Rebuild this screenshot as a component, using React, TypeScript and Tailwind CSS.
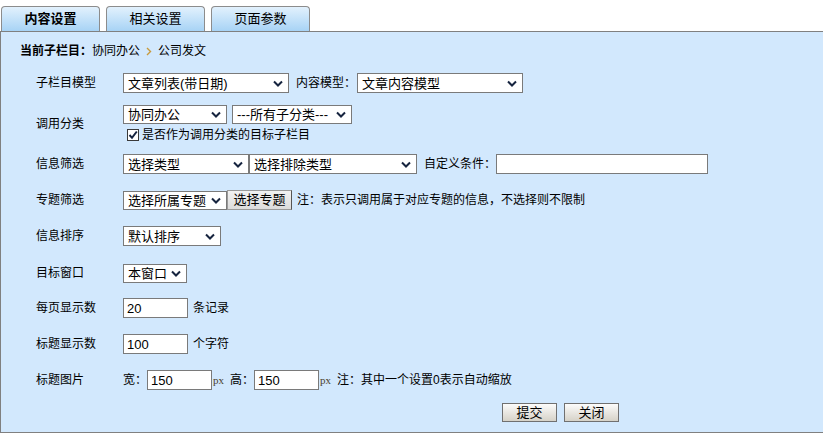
import React from "react";

const font = "font-['Liberation_Sans','Noto_Sans_CJK_SC',sans-serif]";

function Chevron() {
  return (
    <svg width="10" height="7" viewBox="0 0 10 7" className="shrink-0">
      <polyline points="1,1.5 5,5.5 9,1.5" fill="none" stroke="#16243f" strokeWidth="2" />
    </svg>
  );
}

function Select({ value, className }: { value: string; className: string }) {
  return (
    <div
      className={`flex shrink-0 items-center justify-between border border-[#7a7a7a] bg-white pl-[4px] pr-[5px] text-[13px] leading-none text-black ${className}`}
    >
      <span className="whitespace-nowrap">{value}</span>
      <Chevron />
    </div>
  );
}

function TextBox({ value, className }: { value?: string; className: string }) {
  return (
    <div
      className={`flex h-[20px] shrink-0 items-center border border-[#7a7a7a] bg-white pl-[3px] font-['Liberation_Sans',sans-serif] text-[13px] leading-none text-black ${className}`}
    >
      {value}
    </div>
  );
}

function Row({ label, children, className }: { label: string; children: React.ReactNode; className: string }) {
  return (
    <div className={`flex items-center ${className}`}>
      <div className="w-[87px] shrink-0 whitespace-nowrap">{label}</div>
      {children}
    </div>
  );
}

function Px() {
  return (
    <span className="inline-block w-[13px] pl-[1px] font-['Liberation_Serif',serif] text-[11px] text-[#4a3f2c]">
      px
    </span>
  );
}

export default function App() {
  const tabs = ["内容设置", "相关设置", "页面参数"];
  return (
    <div className={`min-h-[437px] bg-white pt-[6px] text-[12px] text-black ${font}`}>
      {/* Tabs */}
      <div className="flex gap-[6px] pl-[1px]">
        {tabs.map((t, i) => (
          <div
            key={t}
            className={`flex h-[25px] w-[99px] items-center justify-center rounded-t-[4px] border border-b-0 border-[#8c8c8c] bg-gradient-to-b from-[#e2f1fd] to-[#a7d3f5] text-[13px] ${
              i === 0 ? "font-bold" : ""
            }`}
          >
            {t}
          </div>
        ))}
      </div>

      {/* Panel */}
      <div className="border-t border-l border-b border-[#808080] bg-[#d2e8fd] pt-[10px] pb-[10px] pl-[19px]">
        <div className="flex h-[18px] items-center">
          <span className="font-bold">当前子栏目：</span>
          <span>协同办公</span>
          <svg width="6" height="9" viewBox="0 0 6 9" className="mx-[6px]">
            <polyline points="1,1 4.5,4.5 1,8" fill="none" stroke="#c89a3c" strokeWidth="1.4" />
          </svg>
          <span>公司发文</span>
        </div>

        <div className="pl-[16px]">
          <Row label="子栏目模型" className="mt-[13px] h-[20px]">
            <Select value="文章列表(带日期)" className="h-[20px] w-[166px]" />
            <span className="ml-[7px] whitespace-nowrap">内容模型：</span>
            <Select value="文章内容模型" className="ml-[1px] h-[20px] w-[166px]" />
          </Row>

          <Row label="调用分类" className="mt-[12px] h-[37px]">
            <div className="flex flex-col">
              <div className="flex h-[19px]">
                <Select value="协同办公" className="h-[19px] w-[104px]" />
                <Select value="---所有子分类---" className="ml-[5px] h-[19px] w-[120px]" />
              </div>
              <div className="mt-[4px] flex h-[14px] items-center pl-[4px]">
                <div className="flex h-[12px] w-[12px] items-center justify-center border border-[#3a3a3a] bg-white">
                  <svg width="10" height="10" viewBox="0 0 10 10">
                    <polyline points="1.5,5 4,7.8 8.8,1.5" fill="none" stroke="#14223f" strokeWidth="2" />
                  </svg>
                </div>
                <span className="ml-[3px] whitespace-nowrap">是否作为调用分类的目标子栏目</span>
              </div>
            </div>
          </Row>

          <Row label="信息筛选" className="mt-[12px] h-[20px]">
            <Select value="选择类型" className="h-[20px] w-[126px]" />
            <Select value="选择排除类型" className="h-[20px] w-[168px]" />
            <span className="ml-[7px] whitespace-nowrap">自定义条件：</span>
            <TextBox className="w-[212px]" />
          </Row>

          <Row label="专题筛选" className="mt-[16px] h-[20px]">
            <Select value="选择所属专题" className="h-[19px] w-[104px]" />
            <div className="flex h-[20px] w-[65px] shrink-0 items-center justify-center border border-[#9a9a9a] border-r-[#555] bg-gradient-to-b from-[#f2f2f2] to-[#dcdcdc] text-[13px]">
              选择专题
            </div>
            <span className="ml-[5px] whitespace-nowrap">注：表示只调用属于对应专题的信息，不选择则不限制</span>
          </Row>

          <Row label="信息排序" className="mt-[16px] h-[20px]">
            <Select value="默认排序" className="h-[20px] w-[98px]" />
          </Row>

          <Row label="目标窗口" className="mt-[17px] h-[20px]">
            <Select value="本窗口" className="h-[19px] w-[64px]" />
          </Row>

          <Row label="每页显示数" className="mt-[15px] h-[20px]">
            <TextBox value="20" className="w-[65px]" />
            <span className="ml-[5px]">条记录</span>
          </Row>

          <Row label="标题显示数" className="mt-[16px] h-[20px]">
            <TextBox value="100" className="w-[65px]" />
            <span className="ml-[5px]">个字符</span>
          </Row>

          <Row label="标题图片" className="mt-[16px] h-[20px]">
            <span className="whitespace-nowrap">宽：</span>
            <TextBox value="150" className="w-[65px]" />
            <Px />
            <span className="ml-[5px] whitespace-nowrap">高：</span>
            <TextBox value="150" className="w-[65px]" />
            <Px />
            <span className="ml-[5px] whitespace-nowrap">注：其中一个设置0表示自动缩放</span>
          </Row>

          <div className="mt-[13px] flex h-[19px] gap-[7px] pl-[466px]">
            {["提交", "关闭"].map((b) => (
              <div
                key={b}
                className="flex h-[19px] w-[55px] items-center justify-center border border-[#707070] bg-gradient-to-b from-[#fcfcfb] to-[#d6d2c8] text-[13px]"
              >
                {b}
              </div>
            ))}
          </div>
        </div>
      </div>
    </div>
  );
}
